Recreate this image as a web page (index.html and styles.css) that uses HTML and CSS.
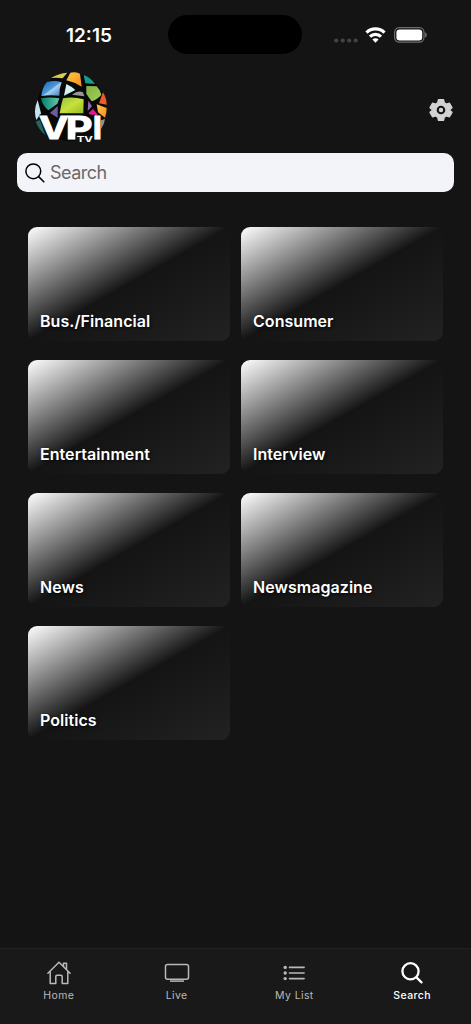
FILE: index.html
```html
<!DOCTYPE html>
<html lang="en">
<head>
  <meta charset="UTF-8">
  <meta name="viewport" content="width=device-width, initial-scale=1.0">
  <title>VPI TV - Search</title>
  <link rel="stylesheet" href="styles.css">
</head>
<body>

<div class="app">
  <!-- Status bar -->
  <div class="status-bar">
    <span class="time">12:15</span>
    <div class="island"></div>
    <div class="status-icons">
      <svg class="signal" width="24" height="5" viewBox="0 0 24 5" fill="#444">
        <circle cx="2.2" cy="2.5" r="2.1"/><circle cx="8.7" cy="2.5" r="2.1"/><circle cx="15.2" cy="2.5" r="2.1"/><circle cx="21.7" cy="2.5" r="2.1"/>
      </svg>
      <svg class="wifi" width="21" height="16" viewBox="0 0 21 16" fill="none" stroke="#fff" stroke-width="3.2">
        <path d="M1.5 5.6a12.8 12.8 0 0 1 18 0"/>
        <path d="M5 9.6a7.8 7.8 0 0 1 11 0"/>
        <path d="M10.5 15.8l-3.1-3.2a4.4 4.4 0 0 1 6.2 0z" fill="#fff" stroke="none"/>
      </svg>
      <svg width="33" height="16" viewBox="0 0 33 16">
        <rect x=".6" y=".6" width="29.4" height="14.6" rx="4.6" fill="none" stroke="#6e6e6e" stroke-width="1.2"/>
        <rect x="2.4" y="2.4" width="25.8" height="11" rx="3.2" fill="#fff"/>
        <path d="M31.2 5.3c2 .8 2 4.4 0 5.2z" fill="#777"/>
      </svg>
    </div>
  </div>

  <!-- Header -->
  <header class="header">
    <svg class="logo" width="74" height="74" viewBox="43 33 222 222">
      <defs>
        <linearGradient id="blue" x1="0" y1="0" x2="1" y2="1"><stop offset="0" stop-color="#1464b5"/><stop offset=".5" stop-color="#4c98d8"/><stop offset=".55" stop-color="#a8d0ed"/><stop offset="1" stop-color="#3577bc"/></linearGradient>
        <linearGradient id="lime" x1="0" y1="0" x2="1" y2="1"><stop offset="0" stop-color="#8cc63f"/><stop offset=".5" stop-color="#c9df3b"/><stop offset="1" stop-color="#8fbd2a"/></linearGradient>
        <linearGradient id="green" x1="0" y1="0" x2="1" y2="1"><stop offset="0" stop-color="#7fb344"/><stop offset="1" stop-color="#a4cf56"/></linearGradient>
        <linearGradient id="orange" x1="0" y1="0" x2="1" y2="1"><stop offset="0" stop-color="#ffc845"/><stop offset="1" stop-color="#f78b1f"/></linearGradient>
        <linearGradient id="teal" x1="0" y1="0" x2="1" y2="0"><stop offset="0" stop-color="#007f6a"/><stop offset="1" stop-color="#68c5b0"/></linearGradient>
      </defs>
      <circle cx="154" cy="141" r="103" fill="#080808"/>
      <path d="M94 54Q116 40 143 38L129 55Q112 52 94 54z" fill="#d8cb4d"/>
      <path d="M152 38Q166 35 181 41L186 80Q163 66 140 61z" fill="url(#orange)"/>
      <path d="M192 45Q213 52 226 72L197 70z" fill="#159b87"/>
      <path d="M65 108Q67 82 82 66Q105 59 126 67Q118 87 119 107Q89 104 65 108z" fill="url(#blue)"/>
      <path d="M140 72Q157 80 167 90L133 107z" fill="#d1f2f4"/>
      <path d="M157 104Q175 90 190 97L194 109z" fill="#96969f"/>
      <path d="M200 78L231 79Q242 90 245 104Q235 117 216 124Q205 109 200 101z" fill="url(#green)"/>
      <path d="M64 115Q91 110 119 115L113 131L86 151Q68 136 64 115z" fill="url(#teal)"/>
      <path d="M130 115Q160 109 192 118L191 160L120 160Q124 135 130 115z" fill="url(#lime)"/>
      <path d="M114 138V173L91 159z" fill="#6e5b9f"/>
      <path d="M206 122L217 139L204 153z" fill="#9868b2"/>
      <path d="M250 97Q261 115 261 134L238 130z" fill="#f05a29"/>
      <path d="M231 133L261 144Q261 159 256 173L235 157z" fill="url(#orange)"/>
      <path d="M220 147L235 165L219 169L206 160z" fill="#ed1292"/>
      <path d="M54 120L64 160L50 180Q40 151 54 120z" fill="#c0e6ee"/>
      <path d="M48 185L61 180L77 226Q57 208 48 185z" fill="#26675a"/>
      <path d="M244 181L256 177Q254 194 244 207z" fill="#8c9395"/>
      <path d="M58 164H88L102 208L120 164H226V240H88z" fill="#080808"/>
      <text class="logo-name" transform="translate(58 236) scale(1.29 1)">V</text>
      <text class="logo-name" transform="translate(138 236) scale(1.35 1)">P</text>
      <text class="logo-name" transform="translate(219 236) scale(1.08 1)">I</text>
      <path d="M168 226H221V251H168z" fill="#141414"/>
      <text class="logo-tv" transform="translate(171 247) scale(1.5 1)">TV</text>
    </svg>
    <svg class="gear" width="24" height="24" viewBox="-.5 -.5 25 25">
      <path fill="#d2d2d2" stroke="#d2d2d2" stroke-width="1.5" stroke-linejoin="round" d="M9.4 1.3h5.2l.8 3.4 2.3 1.3 3.1-1 2.6 4.5L21 11.7v.6l2.4 2.2-2.6 4.5-3.1-1-2.3 1.3-.8 3.4H9.4l-.8-3.4L6.3 18l-3.1 1L.6 14.5 3 12.3v-.6L.6 9.5 3.200 5l3.100 1 2.300-1.300z"/>
      <circle cx="12" cy="12" r="3.4" fill="#d2d2d2" stroke="#141414" stroke-width="2.2"/>
    </svg>
  </header>

  <!-- Search box -->
  <div class="search-box">
    <svg width="20" height="20" viewBox="0 0 20 20" fill="none" stroke="#000" stroke-width="1.5">
      <circle cx="8.3" cy="8.3" r="7.4"/><path d="M13.6 13.6l5.7 5.7"/>
    </svg>
    <span>Search</span>
  </div>

  <!-- Categories -->
  <main class="categories">
    <div class="card"><span>Bus./Financial</span></div>
    <div class="card"><span>Consumer</span></div>
    <div class="card"><span>Entertainment</span></div>
    <div class="card"><span>Interview</span></div>
    <div class="card"><span>News</span></div>
    <div class="card"><span>Newsmagazine</span></div>
    <div class="card"><span>Politics</span></div>
  </main>

  <!-- Bottom tabs -->
  <nav class="tabs">
    <a class="tab">
      <svg width="26" height="26" viewBox="0 0 26 26" fill="none" stroke="currentColor" stroke-width="1.5" stroke-linejoin="round" stroke-linecap="round">
        <path d="M1.9 13.2L13 2.3l11.1 10.9M4.2 11.5v12.1h5.6v-7.2q0-1.2 1.2-1.2h4q1.2 0 1.2 1.2v7.2h5.6V11.5M17.5 6.2V3.2h3v6"/>
      </svg>
      <span>Home</span>
    </a>
    <a class="tab">
      <svg width="26" height="26" viewBox="0 0 26 26" fill="none" stroke="currentColor" stroke-width="1.5">
        <rect x="1.5" y="4.4" width="23" height="14.8" rx="2"/><path d="M6 21.1h14"/>
      </svg>
      <span>Live</span>
    </a>
    <a class="tab">
      <svg width="26" height="26" viewBox="0 0 26 26" fill="none" stroke="currentColor" stroke-width="1.6" stroke-linecap="round">
        <path d="M8.500 7.400h14.600M8.500 13h14.600M8.500 18.600h14.600"/>
        <g fill="currentColor" stroke="none"><circle cx="4.2" cy="7.4" r="1.7"/><circle cx="4.2" cy="13" r="1.7"/><circle cx="4.2" cy="18.6" r="1.7"/></g>
      </svg>
      <span>My List</span>
    </a>
    <a class="tab active">
      <svg width="26" height="26" viewBox="0 0 26 26" fill="none" stroke="currentColor" stroke-width="2.3" stroke-linecap="round">
        <circle cx="11.5" cy="11.3" r="8.1"/><path d="M17.5 17.4l5 5"/>
      </svg>
      <span>Search</span>
    </a>
  </nav>
</div>

</body>
</html>
```
FILE: styles.css
```css
* {
  box-sizing: border-box;
}
body {
  margin: 0;
  background-color: #141414;
  font-family: Inter, Arial, sans-serif;
  color: white;
}
.app {
  display: flex;
  flex-direction: column;
  height: 1024px;
}
svg {
  display: block;
  flex-shrink: 0;
}
/* Status bar */
.status-bar {
  display: grid;
  grid-template-columns: 168px 134px 1fr;
  align-items: center;
  height: 70px;
}
.time {
  padding-left: 66px;
  font-size: 19px;
  font-weight: 600;
}
.island {
  height: 39px;
  margin-bottom: 1px;
  border-radius: 20px;
  background: black;
}
.status-icons {
  display: flex;
  align-items: center;
  padding-left: 32px;
}
.signal {
  margin-top: 10px;
}
.wifi {
  margin: 0 8px 0 7px;
}
/* Header */
.header {
  display: flex;
  justify-content: space-between;
  align-items: center;
  height: 80px;
  padding: 0 18px 0 34px;
}
.logo {
  margin-bottom: 4px;
}
.logo-name {
  font-family: Inter, sans-serif;
  font-size: 92px;
  font-weight: 700;
  fill: white;
  stroke: white;
  stroke-width: 3px;
}
.logo-tv {
  font-family: Inter, sans-serif;
  font-size: 23px;
  font-weight: 700;
  fill: white;
}
.search-box {
  display: flex;
  align-items: center;
  gap: 5px;
  height: 39px;
  margin: 3px 17px 0;
  padding-left: 8px;
  border-radius: 10px;
  background: #f3f4f9;
  color: #69696c;
  font-size: 18px;
  letter-spacing: -0.5px;
}
/* Category cards */
.categories {
  display: grid;
  grid-template-columns: 202px 202px;
  grid-auto-rows: 114px;
  gap: 19px 11px;
  padding: 35px 28px 0;
  flex: 1;
}
.card {
  display: flex;
  align-items: flex-end;
  padding: 0 12px 10px;
  border-radius: 9px;
  background: linear-gradient(to bottom right, #fff, #141414 50%, #222);
  font-size: 16px;
  font-weight: 600;
  letter-spacing: 0.05px;
  text-shadow: 1px 1px 3px rgba(0, 0, 0, 0.8);
}
/* Bottom tabs */
.tabs {
  display: grid;
  grid-template-columns: repeat(4, 1fr);
  height: 76px;
  padding-top: 11px;
  border-top: 1px solid #222;
  background: #191919;
}
.tab {
  display: flex;
  flex-direction: column;
  align-items: center;
  gap: 3px;
  color: #b9b9b9;
  font-size: 10.5px;
  letter-spacing: 0.4px;
}
.tab.active {
  color: white;
  font-weight: 500;
}
```
